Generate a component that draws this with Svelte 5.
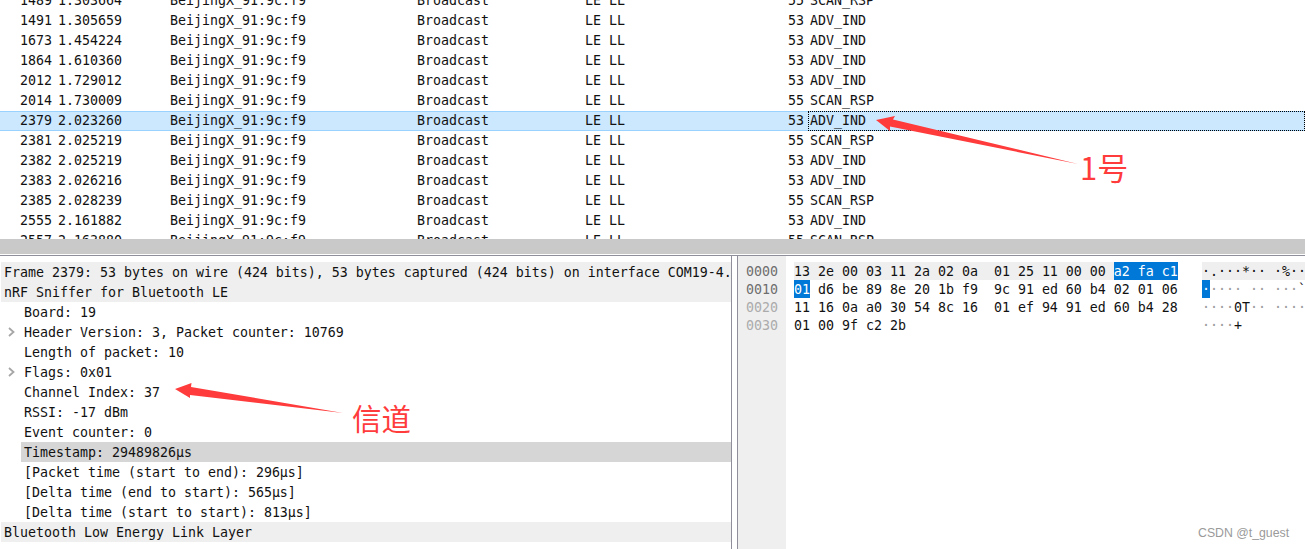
<script>
  const packets = [
    ['1489', '1.303664', 55, 'SCAN_RSP'],
    ['1491', '1.305659', 53, 'ADV_IND'],
    ['1673', '1.454224', 53, 'ADV_IND'],
    ['1864', '1.610360', 53, 'ADV_IND'],
    ['2012', '1.729012', 53, 'ADV_IND'],
    ['2014', '1.730009', 55, 'SCAN_RSP'],
    ['2379', '2.023260', 53, 'ADV_IND'],
    ['2381', '2.025219', 55, 'SCAN_RSP'],
    ['2382', '2.025219', 53, 'ADV_IND'],
    ['2383', '2.026216', 53, 'ADV_IND'],
    ['2385', '2.028239', 55, 'SCAN_RSP'],
    ['2555', '2.161882', 53, 'ADV_IND'],
    ['2557', '2.163880', 55, 'SCAN_RSP']
  ];

  const details = [
    { text: 'Frame 2379: 53 bytes on wire (424 bits), 53 bytes captured (424 bits) on interface COM19-4.', top: true },
    { text: 'nRF Sniffer for Bluetooth LE', top: true },
    { text: 'Board: 19' },
    { text: 'Header Version: 3, Packet counter: 10769', more: true },
    { text: 'Length of packet: 10' },
    { text: 'Flags: 0x01', more: true },
    { text: 'Channel Index: 37' },
    { text: 'RSSI: -17 dBm' },
    { text: 'Event counter: 0' },
    { text: 'Timestamp: 29489826µs', picked: true },
    { text: '[Packet time (start to end): 296µs]' },
    { text: '[Delta time (end to start): 565µs]' },
    { text: '[Delta time (start to start): 813µs]' },
    { text: 'Bluetooth Low Energy Link Layer', top: true }
  ];

  const row0 = '13 2e 00 03 11 2a 02 0a  01 25 11 00 00 ';
  const row0Picked = 'a2 fa c1';
  const row1 = ' d6 be 89 8e 20 1b f9  9c 91 ed 60 b4 02 01 06';
  const row2 = '11 16 0a a0 30 54 8c 16  01 ef 94 91 ed 60 b4 28';
  const row3 = '01 00 9f c2 2b';
</script>

<div class="app">
  <div class="list">
    {#each packets as p}
      <div class="packet" class:sel={p[0] === '2379'}>
        <span class="no">{p[0]}</span>
        <span class="time">{p[1]}</span>
        <span>BeijingX_91:9c:f9</span>
        <span>Broadcast</span>
        <span class="proto"><span>LE LL</span><span>{p[2]}</span></span>
        <span class="info">{p[3]}</span>
      </div>
    {/each}
  </div>

  <div class="sash"></div>

  <div class="panes">
    <div class="tree">
      {#each details as d}
        {#if d.top}
          <div class="node top">{d.text}</div>
        {:else}
          <div class="node">
            <span class="gutter">
              {#if d.more}
                <svg width="7" height="10" viewBox="0 0 7 10"><path d="M1 1l4.5 4-4.5 4" fill="none" stroke="#a6a6a6" stroke-width="1.8" /></svg>
              {/if}
            </span>
            <span class="label" class:picked={d.picked}>{d.text}</span>
          </div>
        {/if}
      {/each}
    </div>

    <div class="split"></div>

    <div class="bytes">
      <div class="offsets">
        <div>0000</div>
        <div>0010</div>
        <div class="dim">0020</div>
        <div class="dim">0030</div>
      </div>
      <div class="dump">
        <div class="line">
          <span class="hex"><span class="band">{row0}</span><span class="hl">{row0Picked}</span></span>
          <span class="ascii band">{'·.···*·· ·%······'}</span>
        </div>
        <div class="line">
          <span class="hex"><span class="hl">01</span>{row1}</span>
          <span class="ascii"><span class="hl">·</span><i>····</i>{' '}<i>··</i>{' '}<i>···</i>`<i>····</i></span>
        </div>
        <div class="line">
          <span class="hex">{row2}</span>
          <span class="ascii"><i>····</i>0T<i>··</i>{' '}<i>·····</i>`<i>·</i>(</span>
        </div>
        <div class="line">
          <span class="hex">{row3}</span>
          <span class="ascii"><i>····</i>+</span>
        </div>
      </div>
    </div>
  </div>

  <svg class="marks" width="1305" height="549" viewBox="0 0 1305 549">
    <path d="M876 120L895 116 893 119.500 1078 164 890 126.500 890 131Z" fill="#ff3b3b" />
    <path d="M175 389L191.500 383 191 387 343 413 190 395 190 398Z" fill="#ff3b3b" />
  </svg>
  <span class="note one">1号</span>
  <span class="note two">信道</span>
  <span class="mark">CSDN @t_guest</span>
</div>

<style>
  :global(body) {
    margin: 0;
    overflow: hidden;
    background: #fff;
  }

  .app {
    position: relative;
    width: 1305px;
    height: 549px;
    overflow: hidden;
    background: #fff;
    color: #111;
    font-family: 'DejaVu Sans Mono', 'Liberation Mono', monospace;
    font-size: 13.29px;
    white-space: nowrap;
  }

  .list {
    height: 239px;
    overflow: hidden;
  }

  .packet {
    display: grid;
    grid-template-columns: 53px 117px 247px 168px 223px 1fr;
    height: 20px;
    line-height: 20px;
    box-sizing: border-box;
  }

  .packet:first-child {
    margin-top: -9px;
  }

  .packet.sel {
    background: #cce8ff;
    box-shadow: inset 0 1px #99d1ff, inset 0 -1px #99d1ff;
  }

  .no {
    text-align: right;
    padding-right: 1px;
  }

  .time {
    padding-left: 5px;
  }

  .proto {
    display: flex;
    justify-content: space-between;
    padding-right: 4px;
  }

  .info {
    padding-left: 2px;
  }

  .sel .info {
    outline: 1px dotted #000;
    outline-offset: -1px;
  }

  .sash {
    height: 15px;
    background: #c9c9c9;
    margin-bottom: 1px;
  }

  .panes {
    display: flex;
    height: 294px;
    border-top: 1px solid #8f8f9c;
  }

  .tree {
    flex: none;
    width: 731px;
    padding-top: 6px;
    overflow: hidden;
  }

  .node {
    display: flex;
    height: 20px;
    line-height: 22px;
  }

  .node.top {
    margin-left: 1px;
    padding-left: 3px;
    background: #efefef;
  }

  .gutter {
    flex: none;
    width: 21px;
    display: flex;
    align-items: center;
    padding-left: 8px;
    box-sizing: border-box;
  }

  .label {
    flex: 1;
    padding-left: 3px;
  }

  .label.picked {
    background: #d6d6d6;
  }

  .split {
    flex: none;
    width: 5px;
    border-left: 1px solid #8f8f9c;
    border-right: 1px solid #8f8f9c;
  }

  .bytes {
    flex: 1;
    display: flex;
    min-width: 0;
  }

  .offsets {
    flex: none;
    width: 48px;
    box-sizing: border-box;
    padding: 7px 0 0 8px;
    background: #efefef;
    color: #6d6d6d;
    line-height: 18px;
  }

  .offsets .dim {
    color: #ababab;
  }

  .dump {
    flex: 1;
    min-width: 0;
    padding: 6px 0 0 8px;
    overflow: hidden;
  }

  .line {
    display: flex;
    height: 18px;
    line-height: 20px;
  }

  .hex {
    flex: none;
    width: 384px;
    margin-right: 24px;
    white-space: pre;
  }

  .ascii {
    flex: 1;
    overflow: hidden;
    white-space: pre;
  }

  .ascii i {
    font-style: normal;
    color: #9a9a9a;
  }

  .band {
    background: #efefef;
  }

  .hex .band,
  .hl {
    display: inline-block;
    height: 18px;
    vertical-align: top;
  }

  .hl {
    background: #0078d7;
    color: #fff;
  }

  .marks {
    position: absolute;
    left: 0;
    top: 0;
    pointer-events: none;
  }

  .note {
    position: absolute;
    color: #ff3b3b;
    font-family: 'Noto Sans CJK SC', 'Noto Sans', sans-serif;
    line-height: 1;
  }

  .note.one {
    left: 1080px;
    top: 151px;
    font-size: 31px;
  }

  .note.two {
    left: 352px;
    top: 403px;
    font-size: 29.500px;
  }

  .mark {
    position: absolute;
    left: 1198px;
    top: 525px;
    color: #9a9a9a;
    font-family: 'Liberation Sans', sans-serif;
    font-size: 12.300px;
    line-height: 16px;
  }
</style>
